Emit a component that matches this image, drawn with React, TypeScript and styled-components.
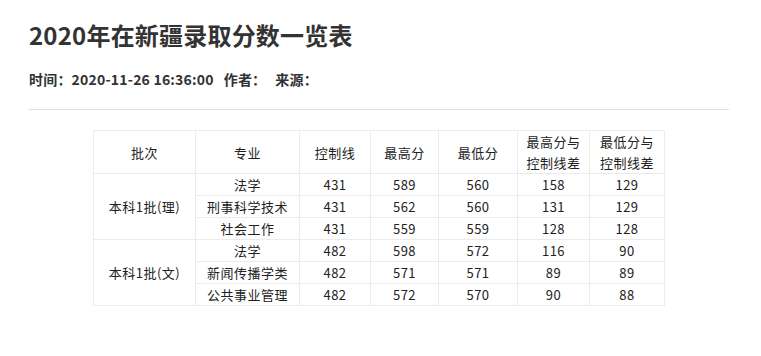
import React from "react";
import styled, { createGlobalStyle } from "styled-components";

const GlobalStyle = createGlobalStyle`
  html, body {
    margin: 0;
    padding: 0;
    background: #fff;
  }
  body {
    font-family: "Noto Sans CJK SC", "Noto Sans", sans-serif;
    color: #333;
  }
`;

const Page = styled.div`
  width: 700px;
  padding: 17px 0 0 29px;
`;

const Title = styled.h1`
  margin: 0;
  font-size: 24px;
  line-height: 36px;
  font-weight: 700;
  color: #333;
  letter-spacing: 0.2px;
`;

const Meta = styled.div`
  display: flex;
  margin-top: 16px;
  font-size: 14px;
  line-height: 20px;
  font-weight: 700;
  color: #333;
`;

const MetaItem = styled.span<{ $gap?: number }>`
  margin-right: ${(p) => p.$gap ?? 0}px;
  letter-spacing: 0.2px;
`;

const Divider = styled.hr`
  margin: 20px 0 0;
  border: 0;
  border-top: 1px solid #ddd;
`;

const TableWrap = styled.div`
  display: flex;
  justify-content: center;
  padding-top: 20px;
`;

const Table = styled.table`
  border-collapse: collapse;
  font-size: 13px;
  color: #222;
`;

const Cell = styled.td<{ $w?: number }>`
  border: 1px solid #ebebeb;
  text-align: center;
  padding: 0;
  height: 21px;
  line-height: 21px;
  width: ${(p) => (p.$w ? `${p.$w}px` : "auto")};
  letter-spacing: 0.5px;
`;

const HeadLine = styled.div`
  line-height: 21px;
`;

const HeadRow = styled.tr`
  height: 43px;
`;

const widths = [101, 103, 70, 67, 78, 71, 74];
const headers = ["批次", "专业", "控制线", "最高分", "最低分", "最高分与\n控制线差", "最低分与\n控制线差"];

const groups = [
  {
    batch: "本科1批(理)",
    rows: [
      ["法学", "431", "589", "560", "158", "129"],
      ["刑事科学技术", "431", "562", "560", "131", "129"],
      ["社会工作", "431", "559", "559", "128", "128"],
    ],
  },
  {
    batch: "本科1批(文)",
    rows: [
      ["法学", "482", "598", "572", "116", "90"],
      ["新闻传播学类", "482", "571", "571", "89", "89"],
      ["公共事业管理", "482", "572", "570", "90", "88"],
    ],
  },
];

export default function App() {
  return (
    <>
      <GlobalStyle />
      <Page>
        <Title>2020年在新疆录取分数一览表</Title>
        <Meta>
          <MetaItem>时间：</MetaItem>
          <MetaItem $gap={10}>2020-11-26 16:36:00</MetaItem>
          <MetaItem $gap={9}>作者：</MetaItem>
          <MetaItem>来源：</MetaItem>
        </Meta>
        <Divider />
        <TableWrap>
          <Table>
            <tbody>
              <HeadRow>
                {headers.map((h, i) => (
                  <Cell key={h} $w={widths[i]}>
                    {h.split("\n").map((l) => (
                      <HeadLine key={l}>{l}</HeadLine>
                    ))}
                  </Cell>
                ))}
              </HeadRow>
              {groups.map((g) =>
                g.rows.map((r, i) => (
                  <tr key={g.batch + i}>
                    {i === 0 && <Cell rowSpan={g.rows.length}>{g.batch}</Cell>}
                    {r.map((c, j) => (
                      <Cell key={j}>{c}</Cell>
                    ))}
                  </tr>
                ))
              )}
            </tbody>
          </Table>
        </TableWrap>
      </Page>
    </>
  );
}
